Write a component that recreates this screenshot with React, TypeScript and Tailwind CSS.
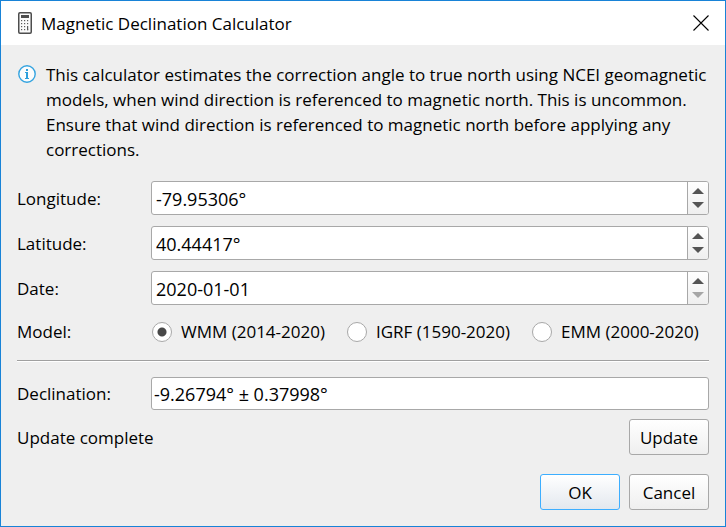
import { useState } from "react";

const MODELS = ["WMM (2014-2020)", "IGRF (1590-2020)", "EMM (2000-2020)"];

function CalculatorIcon() {
  return (
    <svg width="14" height="22" viewBox="0 0 14 22" aria-hidden="true">
      <rect x="0.75" y="0.75" width="12.5" height="20.5" rx="1.2" fill="#fafafa" stroke="#4d4d4d" strokeWidth="1.5" />
      <rect x="3" y="3" width="8" height="3" fill="#4d4d4d" />
      <g fill="#5a5a5a">
        {[8, 11, 14, 17].map((y) =>
          [3, 6, 9].map((x) => (
            <rect key={`${x}-${y}`} x={x} y={y} width="1.2" height={x === 9 && y === 14 ? 4.2 : 1.2} />
          )),
        )}
      </g>
    </svg>
  );
}

function InfoIcon() {
  return (
    <svg width="18" height="18" viewBox="0 0 18 18" className="shrink-0" aria-hidden="true">
      <circle cx="9" cy="9" r="8.2" fill="#fcfcfc" stroke="#35a4e0" strokeWidth="1.4" />
      <rect x="8" y="4" width="2" height="2" fill="#2d9fdc" />
      <path d="M7 7h3v6h1v1H7v-1h1V8H7z" fill="#2d9fdc" />
    </svg>
  );
}

type SpinProps = { id: string; label: string; initial: string; atMinimum?: boolean };

function SpinField({ id, label, initial, atMinimum = false }: SpinProps) {
  const [value, setValue] = useState(initial);
  return (
    <div className="flex items-center">
      <label htmlFor={id} className="w-[134px] shrink-0">
        {label}
      </label>
      <div className="flex h-[34px] min-w-0 flex-1 overflow-hidden rounded-[3px] border border-[#a8a8a8] bg-white">
        <input
          id={id}
          type="text"
          value={value}
          onChange={(e) => setValue(e.target.value)}
          className="min-w-0 flex-1 bg-transparent px-1 pt-px text-lg outline-none"
        />
        <div className="flex w-[21px] flex-col border-l border-[#a8a8a8] bg-linear-to-b from-white to-[#efefef]">
          <button type="button" aria-label={`Increase ${id}`} className="flex flex-1 items-end justify-center pb-1">
            <svg width="12" height="6" viewBox="0 0 12 6" aria-hidden="true">
              <path d="M0 6 6 0l6 6z" fill="#555" />
            </svg>
          </button>
          <button
            type="button"
            disabled={atMinimum}
            aria-label={`Decrease ${id}`}
            className="flex flex-1 items-start justify-center pt-1 text-[#555] disabled:text-[#a6a6a6]"
          >
            <svg width="12" height="6" viewBox="0 0 12 6" aria-hidden="true">
              <path d="M0 0h12L6 6z" fill="currentColor" />
            </svg>
          </button>
        </div>
      </div>
    </div>
  );
}

export default function App() {
  const [model, setModel] = useState(MODELS[0]);
  return (
    <div className="flex min-h-screen flex-col border border-[#1883d7] bg-[#efefef] font-['Open_Sans','Noto_Sans',sans-serif] text-[17px] leading-[25px] text-black">
      <header className="flex h-11 items-center bg-white pr-[15px] pl-[17px]">
        <CalculatorIcon />
        <h1 className="ml-[9px] flex-1">Magnetic Declination Calculator</h1>
        <button type="button" aria-label="Close" className="p-px">
          <svg width="16" height="16" viewBox="0 0 16 16" aria-hidden="true">
            <path d="M.5.5l15 15M15.5.5l-15 15" stroke="#000" strokeWidth="1.1" />
          </svg>
        </button>
      </header>

      <main className="flex flex-1 flex-col px-4 pt-[17px] pb-4">
        <div className="flex gap-[10px]">
          <div className="pt-[3px] pl-px">
            <InfoIcon />
          </div>
          <p className="min-w-0 flex-1">
            This calculator estimates the correction angle to true north using NCEI geomagnetic models, when wind
            direction is referenced to magnetic north. This is uncommon. Ensure that wind direction is referenced to
            magnetic north before applying any corrections.
          </p>
        </div>

        <div className="mt-[19px] flex flex-col gap-[11px]">
          <SpinField id="longitude" label="Longitude:" initial="-79.95306°" />
          <SpinField id="latitude" label="Latitude:" initial="40.44417°" />
          <SpinField id="date" label="Date:" initial="2020-01-01" atMinimum />
        </div>

        <div role="radiogroup" aria-labelledby="model-label" className="mt-[14px] flex items-center">
          <span id="model-label" className="w-[134px] shrink-0">
            Model:
          </span>
          <div className="flex gap-[22px] pl-px whitespace-nowrap">
            {MODELS.map((name) => (
              <label key={name} className="flex items-center gap-[9px]">
                <input
                  type="radio"
                  name="model"
                  checked={model === name}
                  onChange={() => setModel(name)}
                  className="size-5 appearance-none rounded-full border border-[#a8a8a8] bg-white checked:bg-[radial-gradient(circle,#484848_4px,#fff_5px)]"
                />
                {name}
              </label>
            ))}
          </div>
        </div>

        <hr className="mt-4 h-[2px] border-t border-b border-t-[#a0a0a0] border-b-white" />

        <div className="mt-[15px] flex items-center">
          <label htmlFor="declination" className="w-[134px] shrink-0">
            Declination:
          </label>
          <input
            id="declination"
            type="text"
            readOnly
            value="-9.26794° ± 0.37998°"
            className="h-[33px] min-w-0 flex-1 rounded-[3px] border border-[#a8a8a8] bg-white px-[2px] pt-px text-lg outline-none"
          />
        </div>

        <div className="mt-[9px] flex items-center justify-between">
          <span role="status">Update complete</span>
          <button
            type="button"
            className="h-9 w-20 rounded-[3px] border border-[#a8a8a8] bg-linear-to-b from-white to-[#efefef] pt-px"
          >
            Update
          </button>
        </div>

        <div className="mt-auto flex justify-end gap-[9px]">
          <button
            type="button"
            className="h-9 w-20 rounded-[3px] border border-[#3daeff] bg-linear-to-b from-white to-[#e3e8ee] pt-px"
          >
            OK
          </button>
          <button
            type="button"
            className="h-9 w-20 rounded-[3px] border border-[#a8a8a8] bg-linear-to-b from-white to-[#efefef] pt-px"
          >
            Cancel
          </button>
        </div>
      </main>
    </div>
  );
}
